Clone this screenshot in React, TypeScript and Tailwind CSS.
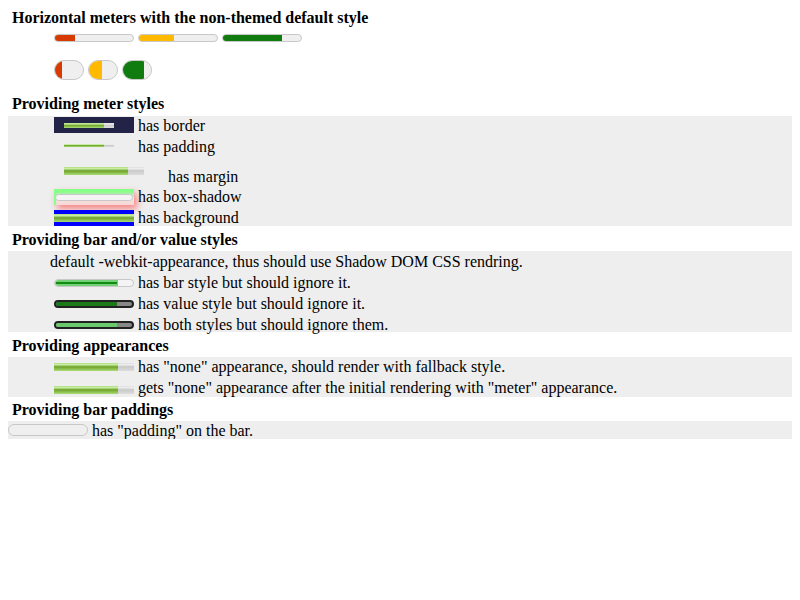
import React from "react";

const GREEN = "bg-[linear-gradient(to_bottom,#ad7_0%,#cea_20%,#7a3_45%,#7a3_55%,#ad7_100%)]";
const BAR = "bg-[linear-gradient(to_bottom,#ddd_0%,#eee_20%,#ccc_45%,#ccc_55%,#ddd_100%)]";

function Fallback({ h, w, fill }: { h: string; w: string; fill: string }) {
  return (
    <div className={`flex ${h} ${w} ${BAR}`}>
      <div className={`h-full ${fill} ${GREEN}`} />
    </div>
  );
}

export default function App() {
  return (
    <div className="flex flex-col px-[8px] [font-family:'Liberation_Serif',serif] text-[16px] leading-[18px] text-black">
      <div className="mt-[8px] h-[18px] pl-[4px] pt-[1px] font-bold">Horizontal meters with the non-themed default style</div>

      <div className="mt-[8px] flex h-[8px] gap-[4px] pl-[46px]">
        <div className="h-[8px] w-[80px] overflow-hidden rounded-full border border-[#c8c8c8] bg-[#efefef]">
          <div className="h-full w-[20px] bg-[#d83b01]" />
        </div>
        <div className="h-[8px] w-[80px] overflow-hidden rounded-full border border-[#c8c8c8] bg-[#efefef]">
          <div className="h-full w-[35px] bg-[#ffb900]" />
        </div>
        <div className="h-[8px] w-[80px] overflow-hidden rounded-full border border-[#c8c8c8] bg-[#efefef]">
          <div className="h-full w-[59px] bg-[#107c10]" />
        </div>
      </div>

      <div className="mt-[18px] flex h-[20px] gap-[4px] pl-[46px]">
        <div className="h-[20px] w-[30px] overflow-hidden rounded-full border border-[#c8c8c8] bg-[#efefef]">
          <div className="h-full w-[7px] bg-[#d83b01]" />
        </div>
        <div className="h-[20px] w-[30px] overflow-hidden rounded-full border border-[#c8c8c8] bg-[#efefef]">
          <div className="h-full w-[13px] bg-[#ffb900]" />
        </div>
        <div className="h-[20px] w-[30px] overflow-hidden rounded-full border border-[#c8c8c8] bg-[#efefef]">
          <div className="h-full w-[21px] bg-[#107c10]" />
        </div>
      </div>

      <div className="mt-[14px] h-[18px] pl-[4px] pt-[1px] font-bold">Providing meter styles</div>

      <div className="mt-[4px] flex flex-col bg-[#eeeeee] pl-[46px]">
        <div className="flex h-[21px] items-start">
          <div className="mt-[1px] h-[16px] w-[80px] bg-[#232347] pl-[10px] pt-[6px]">
            <Fallback h="h-[5px]" w="w-[50px]" fill="w-[40px]" />
          </div>
          <span className="ml-[4px] pt-[1px]">has border</span>
        </div>
        <div className="flex h-[21px] items-start">
          <div className="h-[21px] w-[80px] pl-[10px] pt-[7px]">
            <Fallback h="h-[3px]" w="w-[50px]" fill="w-[40px]" />
          </div>
          <span className="ml-[4px] pt-[1px]">has padding</span>
        </div>
        <div className="flex h-[29px] items-start">
          <div className="ml-[10px] mt-[9px]">
            <Fallback h="h-[8px]" w="w-[80px]" fill="w-[64px]" />
          </div>
          <span className="ml-[24px] mt-[10px]">has margin</span>
        </div>
        <div className="flex h-[21px] items-start">
          <div className="mt-[2px] h-[16px] w-[80px] bg-[linear-gradient(to_bottom,#88ff88_0%,#9cf59c_25%,#fae2e2_60%,#f6d6d6_100%)] px-[1px] pt-[5px] shadow-[inset_2px_3px_1px_#88ff88,3px_4px_7px_rgba(255,30,30,0.5)]">
            <div className="h-[7px] w-full rounded-full border border-[#c8c8c8] bg-[#f4f4f4]" />
          </div>
          <span className="ml-[4px] pt-[1px]">has box-shadow</span>
        </div>
        <div className="flex h-[18px] items-start">
          <div className="mt-[2px] h-[16px] w-[80px] bg-[#0000ff] pt-[4px]">
            <div className={`h-[8px] w-full ${GREEN}`} />
          </div>
          <span className="ml-[4px] pt-[1px]">has background</span>
        </div>
      </div>

      <div className="mt-[4px] h-[18px] pl-[4px] pt-[1px] font-bold">Providing bar and/or value styles</div>

      <div className="mt-[3px] flex flex-col bg-[#eeeeee] pl-[46px]">
        <div className="h-[18px] -ml-[4px] pt-[2px]">default -webkit-appearance, thus should use Shadow DOM CSS rendring.</div>
        <div className="flex h-[21px] items-start">
          <div className="mt-[10px] flex h-[8px] w-[80px] overflow-hidden rounded-full border border-[#c8c8c8] bg-[#f4f4f4]">
            <div className="flex h-full w-[63px] flex-col justify-center rounded-l-full bg-[#74d074] px-[1px]">
              <div className="h-[2px] w-full bg-[#138a13]" />
            </div>
          </div>
          <span className="ml-[4px] mt-[5px]">has bar style but should ignore it.</span>
        </div>
        <div className="flex h-[21px] items-start">
          <div className="mt-[10px] flex h-[8px] w-[80px] overflow-hidden rounded-full border-2 border-[#222222] bg-[#888888]">
            <div className="h-full w-[61px] bg-[#1a7a1a]" />
          </div>
          <span className="ml-[4px] mt-[5px]">has value style but should ignore it.</span>
        </div>
        <div className="flex h-[21px] items-start">
          <div className="mt-[10px] flex h-[8px] w-[80px] overflow-hidden rounded-full border-2 border-[#222222] bg-[#888888]">
            <div className="h-full w-[61px] bg-[#6cc86c]" />
          </div>
          <span className="ml-[4px] mt-[5px]">has both styles but should ignore them.</span>
        </div>
      </div>

      <div className="mt-[4px] h-[18px] pl-[4px] pt-[1px] font-bold">Providing appearances</div>

      <div className="mt-[3px] flex flex-col bg-[#eeeeee] pl-[46px]">
        <div className="flex h-[20px] items-start">
          <div className="mt-[6px]">
            <Fallback h="h-[8px]" w="w-[80px]" fill="w-[64px]" />
          </div>
          <span className="ml-[4px] mt-[1px]">has "none" appearance, should render with fallback style.</span>
        </div>
        <div className="flex h-[20px] items-start">
          <div className="mt-[9px]">
            <Fallback h="h-[8px]" w="w-[80px]" fill="w-[64px]" />
          </div>
          <span className="ml-[4px] mt-[2px]">gets "none" appearance after the initial rendering with "meter" appearance.</span>
        </div>
      </div>

      <div className="mt-[3px] h-[18px] pl-[4px] pt-[1px] font-bold">Providing bar paddings</div>

      <div className="mt-[3px] flex h-[18px] items-start bg-[#eeeeee]">
        <div className="mt-[3px] h-[12px] w-[80px] rounded-full border border-[#c8c8c8] bg-[#efefef]" />
        <span className="ml-[4px] pt-[1px]">has "padding" on the bar.</span>
      </div>
    </div>
  );
}
